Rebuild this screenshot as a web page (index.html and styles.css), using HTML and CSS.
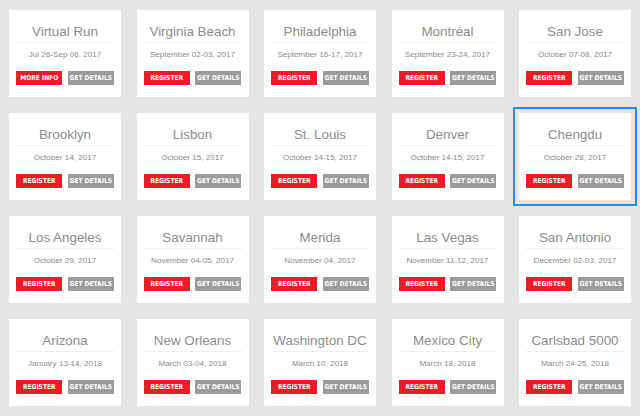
FILE: index.html
```html
<!DOCTYPE html>
<html lang="en">
<head>
<meta charset="utf-8">
<title>Events</title>
<link rel="stylesheet" href="styles.css">
</head>
<body>
<main class="grid">
  <div class="card"><h2 class="title">Virtual Run</h2><p class="date">Jul 26-Sep 06, 2017</p><div class="actions"><a class="btn btn-red">MORE INFO</a><a class="btn btn-gray">GET DETAILS</a></div></div>
  <div class="card"><h2 class="title">Virginia Beach</h2><p class="date">September 02-03, 2017</p><div class="actions"><a class="btn btn-red">REGISTER</a><a class="btn btn-gray">GET DETAILS</a></div></div>
  <div class="card"><h2 class="title">Philadelphia</h2><p class="date">September 16-17, 2017</p><div class="actions"><a class="btn btn-red">REGISTER</a><a class="btn btn-gray">GET DETAILS</a></div></div>
  <div class="card"><h2 class="title">Montréal</h2><p class="date">September 23-24, 2017</p><div class="actions"><a class="btn btn-red">REGISTER</a><a class="btn btn-gray">GET DETAILS</a></div></div>
  <div class="card"><h2 class="title">San Jose</h2><p class="date">October 07-08, 2017</p><div class="actions"><a class="btn btn-red">REGISTER</a><a class="btn btn-gray">GET DETAILS</a></div></div>

  <div class="card"><h2 class="title">Brooklyn</h2><p class="date">October 14, 2017</p><div class="actions"><a class="btn btn-red">REGISTER</a><a class="btn btn-gray">GET DETAILS</a></div></div>
  <div class="card"><h2 class="title">Lisbon</h2><p class="date">October 15, 2017</p><div class="actions"><a class="btn btn-red">REGISTER</a><a class="btn btn-gray">GET DETAILS</a></div></div>
  <div class="card"><h2 class="title">St. Louis</h2><p class="date">October 14-15, 2017</p><div class="actions"><a class="btn btn-red">REGISTER</a><a class="btn btn-gray">GET DETAILS</a></div></div>
  <div class="card"><h2 class="title">Denver</h2><p class="date">October 14-15, 2017</p><div class="actions"><a class="btn btn-red">REGISTER</a><a class="btn btn-gray">GET DETAILS</a></div></div>
  <div class="card card-focus"><h2 class="title">Chengdu</h2><p class="date">October 28, 2017</p><div class="actions"><a class="btn btn-red">REGISTER</a><a class="btn btn-gray">GET DETAILS</a></div></div>

  <div class="card"><h2 class="title">Los Angeles</h2><p class="date">October 29, 2017</p><div class="actions"><a class="btn btn-red">REGISTER</a><a class="btn btn-gray">GET DETAILS</a></div></div>
  <div class="card"><h2 class="title">Savannah</h2><p class="date">November 04-05, 2017</p><div class="actions"><a class="btn btn-red">REGISTER</a><a class="btn btn-gray">GET DETAILS</a></div></div>
  <div class="card"><h2 class="title">Merida</h2><p class="date">November 04, 2017</p><div class="actions"><a class="btn btn-red">REGISTER</a><a class="btn btn-gray">GET DETAILS</a></div></div>
  <div class="card"><h2 class="title">Las Vegas</h2><p class="date">November 11-12, 2017</p><div class="actions"><a class="btn btn-red">REGISTER</a><a class="btn btn-gray">GET DETAILS</a></div></div>
  <div class="card"><h2 class="title">San Antonio</h2><p class="date">December 02-03, 2017</p><div class="actions"><a class="btn btn-red">REGISTER</a><a class="btn btn-gray">GET DETAILS</a></div></div>

  <div class="card"><h2 class="title">Arizona</h2><p class="date">January 13-14, 2018</p><div class="actions"><a class="btn btn-red">REGISTER</a><a class="btn btn-gray">GET DETAILS</a></div></div>
  <div class="card"><h2 class="title">New Orleans</h2><p class="date">March 03-04, 2018</p><div class="actions"><a class="btn btn-red">REGISTER</a><a class="btn btn-gray">GET DETAILS</a></div></div>
  <div class="card"><h2 class="title">Washington DC</h2><p class="date">March 10, 2018</p><div class="actions"><a class="btn btn-red">REGISTER</a><a class="btn btn-gray">GET DETAILS</a></div></div>
  <div class="card"><h2 class="title">Mexico City</h2><p class="date">March 18, 2018</p><div class="actions"><a class="btn btn-red">REGISTER</a><a class="btn btn-gray">GET DETAILS</a></div></div>
  <div class="card"><h2 class="title">Carlsbad 5000</h2><p class="date">March 24-25, 2018</p><div class="actions"><a class="btn btn-red">REGISTER</a><a class="btn btn-gray">GET DETAILS</a></div></div>
</main>
</body>
</html>
```

FILE: styles.css
```css
* { box-sizing: border-box; }

html, body {
  margin: 0;
  padding: 0;
  background: #e6e6e6;
  font-family: "Liberation Sans", Arial, Helvetica, sans-serif;
}

.grid {
  display: grid;
  grid-template-columns: repeat(5, 1fr);
  column-gap: 15.5px;
  row-gap: 16px;
  padding: 10px 9px;
}

.card {
  background: #ffffff;
  height: 87px;
  padding: 0 7px;
  display: flex;
  flex-direction: column;
}

.card-focus {
  outline: 2px solid #2a8be6;
  outline-offset: 4px;
}

.title {
  margin: 0;
  padding: 14px 0 2px;
  border-bottom: 1px solid #eeeeee;
  font-size: 13.4px;
  line-height: 16px;
  font-weight: normal;
  color: #8c8c8c;
  text-align: center;
  white-space: nowrap;
}

.date {
  margin: 7px 0 0;
  font-size: 8.1px;
  line-height: 10px;
  color: #8a8a8a;
  text-align: center;
  white-space: nowrap;
}

.actions {
  margin-top: 11px;
  display: flex;
  justify-content: center;
  gap: 5.5px;
}

.btn {
  width: 46px;
  height: 13.5px;
  display: flex;
  align-items: center;
  justify-content: center;
  color: #ffffff;
  font-family: "Liberation Sans Narrow", "DejaVu Sans Condensed", "Liberation Sans", sans-serif;
  font-stretch: condensed;
  font-weight: bold;
  font-size: 6.6px;
  letter-spacing: 0;
  white-space: nowrap;
}

.btn-red { background: #e61e28; }
.btn-gray { background: #9b9b9b; }
```
